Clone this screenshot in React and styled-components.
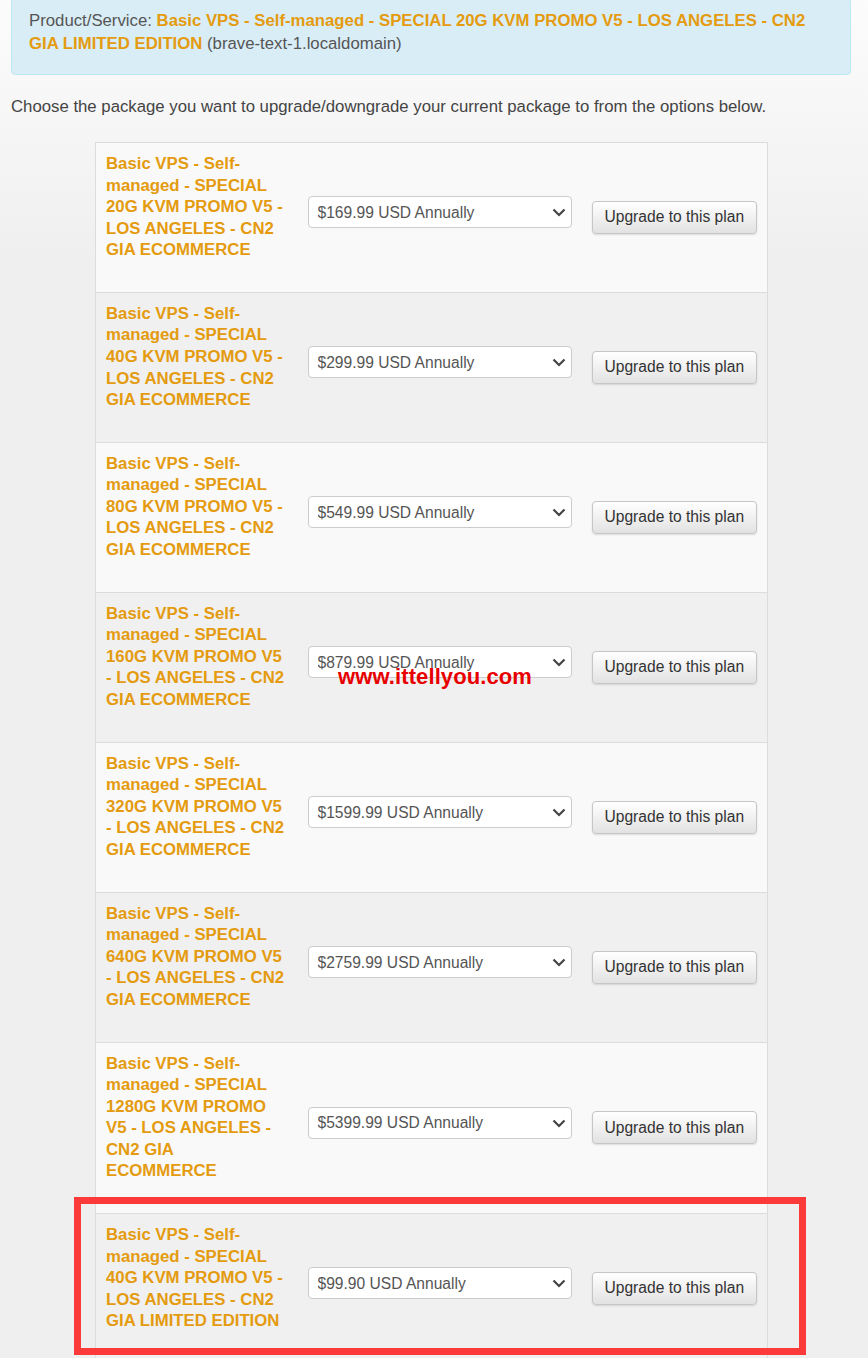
import React from "react";
import styled, { createGlobalStyle } from "styled-components";

const Global = createGlobalStyle`
  html, body { margin: 0; padding: 0; }
  body {
    background: #efefef linear-gradient(to bottom, #fcfcfc 0, #efefef 260px) no-repeat;
    font-family: "Liberation Sans", Arial, sans-serif;
    font-size: 16.75px;
    color: #444;
  }
`;

const Page = styled.div`
  position: relative;
  width: 868px;
  padding: 0 17px 0 11px;
  box-sizing: border-box;
  overflow: hidden;
  height: 1358px;
`;

const Alert = styled.div`
  margin-top: -2px;
  padding: 10px 17px 19px;
  background: #d9edf7;
  border: 1px solid #bce8f1;
  border-radius: 4px;
  color: #555;
  line-height: 23px;
`;

const Orange = styled.strong`
  color: #e49b0f;
  font-weight: bold;
`;

const Intro = styled.p`
  margin: 21px 0 24px;
  line-height: 22px;
  color: #444;
`;

const Table = styled.table`
  width: 672px;
  margin: 0 0 0 84px;
  border-collapse: collapse;
  table-layout: fixed;
  border: 1px solid #dcdcdc;
`;

const Row = styled.tr`
  background: ${(p) => (p.$alt ? "#f0f0f0" : "#f9f9f9")};
  border-top: 1px solid #dcdcdc;
`;

const NameCell = styled.td`
  padding: 10px 10px 31.2px;
  vertical-align: top;
  color: #e49b0f;
  font-weight: bold;
  line-height: 21.55px;
`;

const MidCell = styled.td`
  vertical-align: middle;
  padding: 0 10px;
`;

const SelectWrap = styled.div`
  position: relative;
  width: 264px;
  margin-bottom: 10px;
`;

const Select = styled.select`
  appearance: none;
  -webkit-appearance: none;
  width: 264px;
  height: 32px;
  padding: 0 30px 0 9px;
  background: #fff;
  border: 1px solid #ccc;
  border-radius: 4px;
  font-family: "Liberation Sans", Arial, sans-serif;
  font-size: 15.6px;
  color: #555;
  outline: none;
`;

const Chevron = styled.svg`
  position: absolute;
  right: 6px;
  top: 12px;
  pointer-events: none;
`;

const Button = styled.button`
  width: 165px;
  height: 33px;
  padding: 0 12px;
  background: linear-gradient(to bottom, #ffffff 0%, #e2e2e2 100%);
  border: 1px solid #c6c6c6;
  border-radius: 4px;
  box-shadow: 0 1px 2px rgba(0, 0, 0, 0.12);
  font-family: "Liberation Sans", Arial, sans-serif;
  font-size: 15.6px;
  color: #333;
  white-space: nowrap;
  cursor: pointer;
`;

const Watermark = styled.div`
  position: absolute;
  left: 338px;
  top: 665px;
  color: #e80000;
  font-family: "Liberation Sans", Arial, sans-serif;
  font-weight: bold;
  font-size: 22px;
  line-height: 24px;
  letter-spacing: 0.1px;
  pointer-events: none;
`;

const Highlight = styled.div`
  position: absolute;
  left: 74px;
  top: 1197px;
  width: 732px;
  height: 158px;
  box-sizing: border-box;
  border: 7px solid #fd3a3a;
  pointer-events: none;
`;

const plans = [
  { name: "Basic VPS - Self-managed - SPECIAL 20G KVM PROMO V5 - LOS ANGELES - CN2 GIA ECOMMERCE", price: "$169.99 USD Annually" },
  { name: "Basic VPS - Self-managed - SPECIAL 40G KVM PROMO V5 - LOS ANGELES - CN2 GIA ECOMMERCE", price: "$299.99 USD Annually" },
  { name: "Basic VPS - Self-managed - SPECIAL 80G KVM PROMO V5 - LOS ANGELES - CN2 GIA ECOMMERCE", price: "$549.99 USD Annually" },
  { name: "Basic VPS - Self-managed - SPECIAL 160G KVM PROMO V5 - LOS ANGELES - CN2 GIA ECOMMERCE", price: "$879.99 USD Annually" },
  { name: "Basic VPS - Self-managed - SPECIAL 320G KVM PROMO V5 - LOS ANGELES - CN2 GIA ECOMMERCE", price: "$1599.99 USD Annually" },
  { name: "Basic VPS - Self-managed - SPECIAL 640G KVM PROMO V5 - LOS ANGELES - CN2 GIA ECOMMERCE", price: "$2759.99 USD Annually" },
  { name: "Basic VPS - Self-managed - SPECIAL 1280G KVM PROMO V5 - LOS ANGELES - CN2 GIA ECOMMERCE", price: "$5399.99 USD Annually" },
  { name: "Basic VPS - Self-managed - SPECIAL 40G KVM PROMO V5 - LOS ANGELES - CN2 GIA LIMITED EDITION", price: "$99.90 USD Annually" },
];

export default function App() {
  return (
    <>
      <Global />
      <Page>
        <Alert>
          Product/Service:{" "}
          <Orange>
            Basic VPS - Self-managed - SPECIAL 20G KVM PROMO V5 - LOS ANGELES - CN2 GIA LIMITED EDITION
          </Orange>{" "}
          (brave-text-1.localdomain)
        </Alert>
        <Intro>
          Choose the package you want to upgrade/downgrade your current package to from the options below.
        </Intro>
        <Table>
          <colgroup>
            <col style={{ width: 202 }} />
            <col style={{ width: 284 }} />
            <col style={{ width: 186 }} />
          </colgroup>
          <tbody>
            {plans.map((p, i) => (
              <Row key={i} $alt={i % 2 === 1}>
                <NameCell>{p.name}</NameCell>
                <MidCell>
                  <SelectWrap>
                    <Select defaultValue={p.price}>
                      <option>{p.price}</option>
                    </Select>
                    <Chevron width="14" height="9" viewBox="0 0 14 9">
                      <path d="M1.5 1.5 L7 7 L12.5 1.5" fill="none" stroke="#444" strokeWidth="2.2" />
                    </Chevron>
                  </SelectWrap>
                </MidCell>
                <MidCell>
                  <Button>Upgrade to this plan</Button>
                </MidCell>
              </Row>
            ))}
          </tbody>
        </Table>
        <Watermark>www.ittellyou.com</Watermark>
        <Highlight />
      </Page>
    </>
  );
}
